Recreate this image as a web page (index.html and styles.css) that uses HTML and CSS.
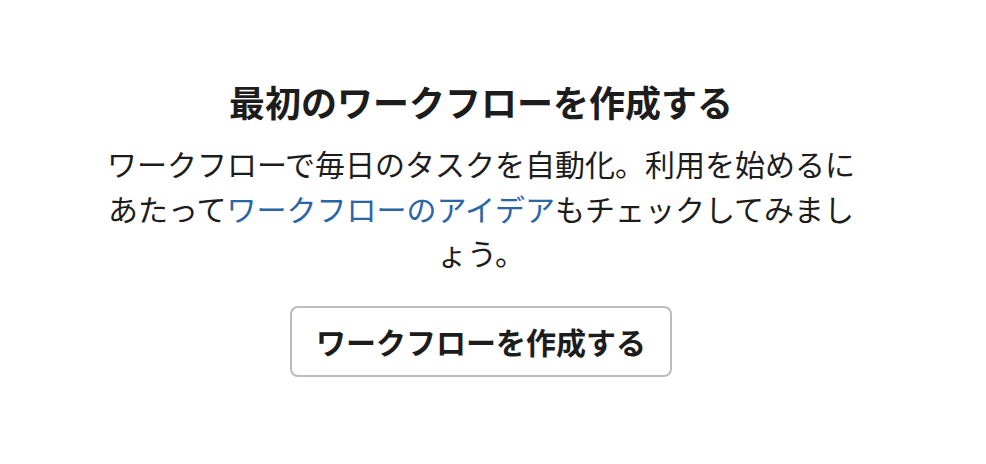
FILE: index.html
```html
<!DOCTYPE html>
<html lang="ja">
<head>
<meta charset="utf-8">
<title>ワークフロー</title>
<link rel="stylesheet" href="styles.css">
</head>
<body>
<main class="page">
  <section class="empty">
    <h1 class="empty-title">最初のワークフローを作成する</h1>
    <p class="empty-text">ワークフローで毎日のタスクを自動化。利用を始めるにあたって<a class="empty-link" href="#">ワークフローのアイデア</a>もチェックしてみましょう。</p>
    <button class="empty-button" type="button">ワークフローを作成する</button>
  </section>
</main>
</body>
</html>
```

FILE: styles.css
```css
html, body {
  margin: 0;
  padding: 0;
  background: #ffffff;
}

body {
  font-family: "Noto Sans CJK JP", "Noto Sans", sans-serif;
  color: #1d1c1d;
}

.page {
  display: flex;
  justify-content: center;
  padding: 79px 24px 0 0;
}

.empty {
  display: flex;
  flex-direction: column;
  align-items: center;
  width: 760px;
  text-align: center;
}

.empty-title {
  margin: 0;
  font-size: 36px;
  line-height: 44px;
  font-weight: 700;
}

.empty-text {
  margin: 18px 0 0;
  font-size: 30px;
  line-height: 44.5px;
  font-weight: 400;
  line-break: normal;
}

.empty-link {
  color: #2a66a5;
  text-decoration: none;
}

.empty-button {
  margin-top: 31px;
  box-sizing: border-box;
  height: 71px;
  padding: 0 24px;
  border: 2px solid #bbbbbb;
  border-radius: 8px;
  background: #ffffff;
  font-family: inherit;
  font-size: 30px;
  font-weight: 700;
  color: #1d1c1d;
  line-height: 1;
  cursor: pointer;
}
```
